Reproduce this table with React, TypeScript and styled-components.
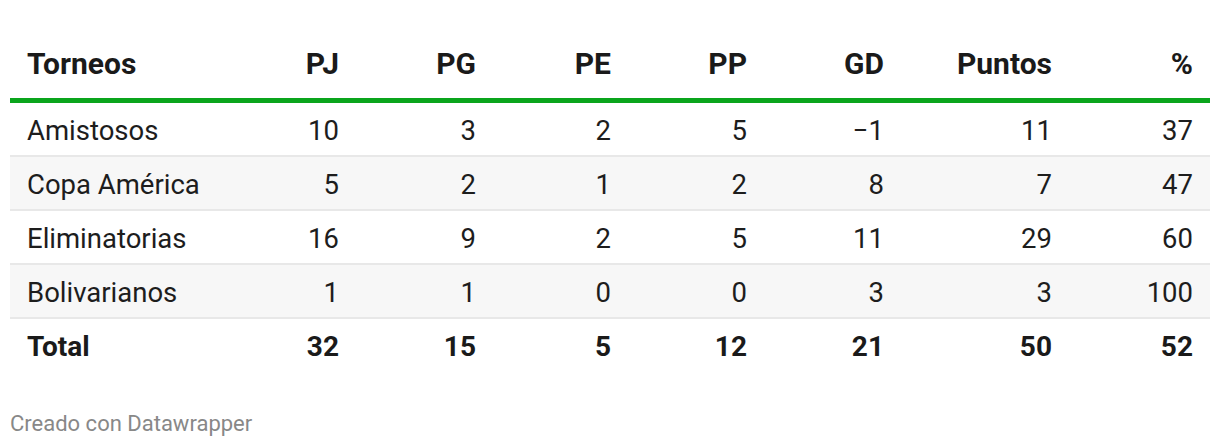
import React from "react";
import styled, { createGlobalStyle } from "styled-components";

const Global = createGlobalStyle`
  html, body { margin: 0; padding: 0; background: #ffffff; }
  body { font-family: Roboto, "Liberation Sans", Arial, sans-serif; color: #1d1d1d; }
`;

const Wrapper = styled.div`
  padding: 28px 10px 0 10px;
  width: 1200px;
`;

const Table = styled.div`
  display: flex;
  flex-direction: column;
`;

const COLS = "210px 136px 137px 135px 136px 137px 168px 141px";

const Row = styled.div<{ $shaded?: boolean; $variant?: "head" | "body" | "total" }>`
  display: grid;
  grid-template-columns: ${COLS};
  align-items: center;
  box-sizing: border-box;
  background: ${(p) => (p.$shaded ? "#f7f7f7" : "#ffffff")};
  height: ${(p) => (p.$variant === "head" ? "75px" : p.$variant === "total" ? "52px" : "54px")};
  padding-top: ${(p) => (p.$variant === "head" ? "1px" : "2px")};
  border-bottom: ${(p) =>
    p.$variant === "head"
      ? "5px solid #0aa51c"
      : p.$variant === "total"
      ? "none"
      : "2px solid #e8e8e8"};
  font-weight: ${(p) => (p.$variant === "body" ? 400 : 700)};
  font-size: ${(p) =>
    p.$variant === "head" ? "30px" : p.$variant === "total" ? "28px" : "27.5px"};
  color: ${(p) => (p.$variant === "body" ? "#1d1d1d" : "#1a1a1a")};
`;

const Cell = styled.div<{ $align?: "left" | "right" }>`
  padding: 0 17px;
  text-align: ${(p) => p.$align ?? "right"};
  white-space: nowrap;
  font-variant-numeric: tabular-nums;
`;

const Footer = styled.div`
  margin-top: 40px;
  font-size: 22px;
  color: #888888;
`;

const headers = ["Torneos", "PJ", "PG", "PE", "PP", "GD", "Puntos", "%"];
const rows: string[][] = [
  ["Amistosos", "10", "3", "2", "5", "\u22121", "11", "37"],
  ["Copa América", "5", "2", "1", "2", "8", "7", "47"],
  ["Eliminatorias", "16", "9", "2", "5", "11", "29", "60"],
  ["Bolivarianos", "1", "1", "0", "0", "3", "3", "100"],
];
const total = ["Total", "32", "15", "5", "12", "21", "50", "52"];

export default function App() {
  return (
    <>
      <Global />
      <Wrapper>
        <Table>
          <Row $variant="head">
            {headers.map((h, i) => (
              <Cell key={h} $align={i === 0 ? "left" : "right"}>
                {h}
              </Cell>
            ))}
          </Row>
          {rows.map((r, ri) => (
            <Row key={r[0]} $variant="body" $shaded={ri % 2 === 1}>
              {r.map((c, i) => (
                <Cell key={i} $align={i === 0 ? "left" : "right"}>
                  {c}
                </Cell>
              ))}
            </Row>
          ))}
          <Row $variant="total">
            {total.map((c, i) => (
              <Cell key={i} $align={i === 0 ? "left" : "right"}>
                {c}
              </Cell>
            ))}
          </Row>
        </Table>
        <Footer>Creado con Datawrapper</Footer>
      </Wrapper>
    </>
  );
}
